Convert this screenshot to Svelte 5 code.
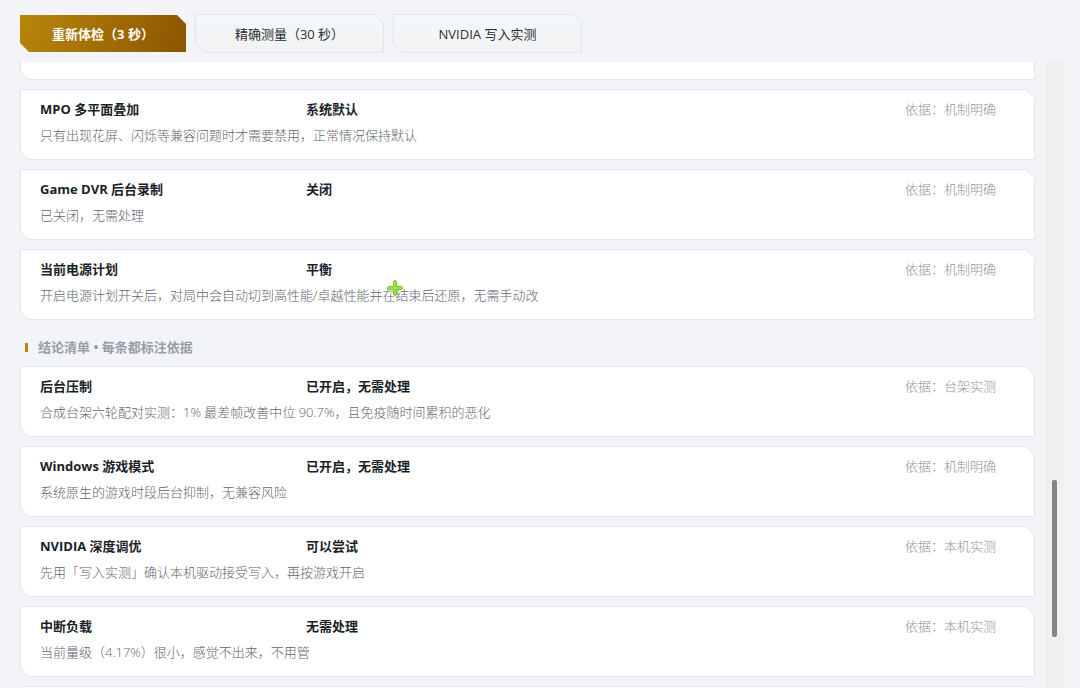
<script lang="ts">
	interface Finding {
		name: string;
		value: string;
		desc: string;
		basis: string;
	}

	const settings: Finding[] = [
		{
			name: 'MPO 多平面叠加',
			value: '系统默认',
			desc: '只有出现花屏、闪烁等兼容问题时才需要禁用，正常情况保持默认',
			basis: '机制明确'
		},
		{ name: 'Game DVR 后台录制', value: '关闭', desc: '已关闭，无需处理', basis: '机制明确' },
		{
			name: '当前电源计划',
			value: '平衡',
			desc: '开启电源计划开关后，对局中会自动切到高性能/卓越性能并在结束后还原，无需手动改',
			basis: '机制明确'
		}
	];

	const conclusions: Finding[] = [
		{
			name: '后台压制',
			value: '已开启，无需处理',
			desc: '合成台架六轮配对实测：1% 最差帧改善中位 90.7%，且免疫随时间累积的恶化',
			basis: '台架实测'
		},
		{
			name: 'Windows 游戏模式',
			value: '已开启，无需处理',
			desc: '系统原生的游戏时段后台抑制，无兼容风险',
			basis: '机制明确'
		},
		{
			name: 'NVIDIA 深度调优',
			value: '可以尝试',
			desc: '先用「写入实测」确认本机驱动接受写入，再按游戏开启',
			basis: '本机实测'
		},
		{
			name: '中断负载',
			value: '无需处理',
			desc: '当前量级（4.17%）很小，感觉不出来，不用管',
			basis: '本机实测'
		}
	];
</script>

{#snippet card(item: Finding)}
	<article class="card cut">
		<div class="row">
			<h3>{item.name}</h3>
			<strong>{item.value}</strong>
			<span class="basis">依据：{item.basis}</span>
		</div>
		<p>{item.desc}</p>
	</article>
{/snippet}

<main>
	<div class="toolbar">
		<button class="btn primary">重新体检（3 秒）</button>
		<button class="btn cut">精确测量（30 秒）</button>
		<button class="btn cut">NVIDIA 写入实测</button>
	</div>

	<div class="viewport">
		<div class="list">
			<div class="card cut tail"></div>
			{#each settings as item}
				{@render card(item)}
			{/each}

			<h2>结论清单 • 每条都标注依据</h2>
			{#each conclusions as item}
				{@render card(item)}
			{/each}
			<div class="card cut"></div>
		</div>
		<div class="track">
			<div class="thumb"></div>
		</div>
	</div>

	<svg class="cursor" width="18" height="18" viewBox="0 0 18 18" aria-hidden="true">
		<path
			d="M9 1l2 2.500H10.500V7.500H14.500V7L17 9l-2.500 2v-.500H10.500V14.500H11L9 17l-2-2.500H7.500V10.500H3.500V11L1 9l2.500-2v.500H7.500V3.500H7z"
			fill="#a4e238"
			stroke="#76bf2e"
			stroke-linejoin="round"
		/>
	</svg>
</main>

<style>
	:global(body) {
		margin: 0;
		background: #f3f4f8;
	}

	main {
		display: flex;
		flex-direction: column;
		box-sizing: border-box;
		height: 100vh;
		padding: 14px 16px 0 20px;
		overflow: hidden;
		position: relative;
		font-family: 'Open Sans', 'Noto Sans CJK SC', sans-serif;
		font-size: 13px;
		line-height: 20px;
		color: #1b1f27;
	}

	/* top-right and bottom-left corners are cut off, border included */
	.cut {
		--c: 9px;
		position: relative;
		z-index: 0;
		background: #e2e5e9;
		clip-path: polygon(
			0 0,
			calc(100% - var(--c)) 0,
			100% var(--c),
			100% 100%,
			var(--c) 100%,
			0 calc(100% - var(--c))
		);

		&::before {
			--c: 8px;
			content: '';
			position: absolute;
			inset: 1px;
			z-index: -1;
			background: var(--fill, #fff);
			clip-path: polygon(
				0 0,
				calc(100% - var(--c)) 0,
				100% var(--c),
				100% 100%,
				var(--c) 100%,
				0 calc(100% - var(--c))
			);
		}
	}

	.toolbar {
		display: flex;
		align-items: center;
		gap: 9px;
		padding-bottom: 9px;
	}

	.btn {
		--fill: linear-gradient(#f4f8fb, #f2f2f2);
		min-width: 189px;
		height: 39px;
		padding: 0 30px;
		border: 0;
		font: inherit;
		color: #2a2e35;
		cursor: pointer;
	}

	.primary {
		min-width: 166px;
		height: 37px;
		background: linear-gradient(110deg, #b9860b, #8b5500);
		color: #fff;
		font-weight: 700;
		clip-path: polygon(
			0 0,
			calc(100% - 9px) 0,
			100% 9px,
			100% 100%,
			9px 100%,
			0 calc(100% - 9px)
		);
	}

	.viewport {
		display: flex;
		flex: 1;
		min-height: 0;
		gap: 11px;
		overflow: hidden;
	}

	.list {
		display: flex;
		flex: 1;
		flex-direction: column;
		gap: 9px;
	}

	.card {
		flex: none;
		box-sizing: border-box;
		min-height: 71px;
		padding: 10px 39px 14px 20px;
	}

	.tail {
		margin-top: -53px;
	}

	.row {
		display: flex;
		align-items: center;
	}

	h3 {
		flex: 0 0 266px;
		margin: 0;
		font-size: 13px;
		font-weight: 700;
	}

	.basis {
		margin-left: auto;
		font-weight: 300;
		color: #8f949f;
	}

	p {
		margin: 6px 0 0;
		font-weight: 300;
		color: #5f6570;
	}

	h2 {
		display: flex;
		align-items: center;
		gap: 10px;
		margin: 8px 0 0 5px;
		font-size: 13px;
		font-weight: 700;
		line-height: 20px;
		color: #979da7;

		&::before {
			content: '';
			width: 3px;
			height: 9px;
			background: #b9860b;
		}
	}

	.track {
		flex: none;
		width: 18px;
		background: #f0f0f0;
	}

	.thumb {
		width: 5px;
		height: 25%;
		margin: 418px 0 0 6px;
		border-radius: 2px;
		background: #858585;
	}

	.cursor {
		position: absolute;
		left: 386px;
		top: 279px;
	}
</style>
